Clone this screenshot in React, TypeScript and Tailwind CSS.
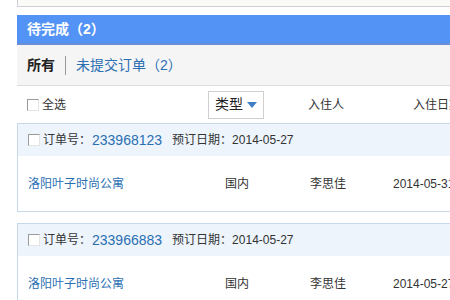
import React from 'react'

const orders = [
  { id: '233968123', date: '2014-05-27', hotel: '洛阳叶子时尚公寓', type: '国内', guest: '李思佳', checkin: '2014-05-31' },
  { id: '233966883', date: '2014-05-27', hotel: '洛阳叶子时尚公寓', type: '国内', guest: '李思佳', checkin: '2014-05-27' },
]

function Box() {
  return <span className="inline-block w-[12px] h-[12px] border border-[#9a9a9a] border-r-[#e4e4e4] border-b-[#e4e4e4] bg-white mr-[3px]" />
}

export default function App() {
  return (
    <div
      className="w-[450px] h-[300px] overflow-hidden bg-white text-[12px] text-[#333]"
      style={{ fontFamily: '"Liberation Sans", "Noto Sans CJK SC", sans-serif' }}
    >
      <div className="ml-[17px] w-[600px]">
        <div className="h-[7px] bg-[#fafaf6] border-l border-b border-[#d3cfd8]" />
        <div className="h-[8px]" />
        <div className="h-[30px] bg-[#5393f6] border-b-2 border-[#6a8fd6] flex items-center pl-[10px] text-white text-[14px] font-bold">
          待完成（2）
        </div>
        <div className="h-[41px] bg-[#f5f5f5] border-b border-[#dcdcdc] flex items-center pl-[10px] text-[14px]">
          <span className="font-bold text-[#222]">所有</span>
          <span className="w-px h-[19px] bg-[#999] mx-[10px]" />
          <span className="text-[#2b6fb3]">未提交订单（2）</span>
        </div>
        <div className="h-[37px] flex items-center pl-[10px]">
          <div className="w-[181px] flex items-center">
            <Box />
            全选
          </div>
          <div className="w-[56px] h-[28px] border border-[#cfcfcf] flex items-center justify-center gap-[4px] text-[14px] text-[#222]">
            类型
            <svg width="10" height="6" viewBox="0 0 10 6"><path d="M0 0h10L5 6z" fill="#3d7fc4" /></svg>
          </div>
          <div className="w-[149px] pl-[44px]">入住人</div>
          <div>入住日期</div>
        </div>
        {orders.map((o, i) => (
          <div key={o.id} className={`border border-[#c6d9ea] ${i > 0 ? 'mt-[11px]' : ''}`}>
            <div className="h-[32px] bg-[#edf4fc] flex items-center pl-[10px]">
              <Box />
              订单号：
              <span className="text-[14px] text-[#2b6fb3] ml-[1px] mr-[10px]">{o.id}</span>
              预订日期：{o.date}
            </div>
            <div className="h-[55px] flex items-center pl-[10px]">
              <span className="w-[197px] text-[#2b6fb3]">{o.hotel}</span>
              <span className="w-[85px]">{o.type}</span>
              <span className="w-[83px]">{o.guest}</span>
              <span>{o.checkin}</span>
            </div>
          </div>
        ))}
      </div>
    </div>
  )
}
